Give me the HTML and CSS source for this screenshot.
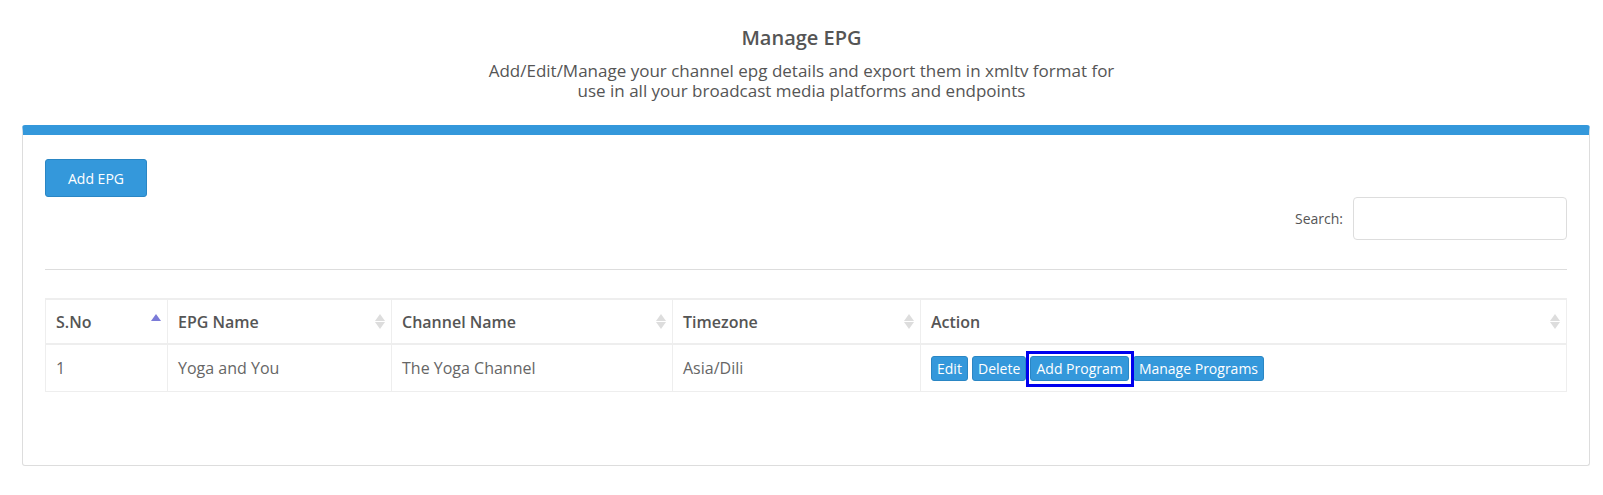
FILE: index.html
```html
<!DOCTYPE html>
<html lang="en">
<head>
    <meta charset="UTF-8">
    <meta name="viewport" content="width=device-width, initial-scale=1.0">
    <title>Manage EPG</title>
    <link rel="stylesheet" href="styles.css">
</head>
<body>
    <div class="page-head">
        <h1>Manage EPG</h1>
        <p>Add/Edit/Manage your channel epg details and export them in xmltv format for<br>use in all your broadcast media platforms and endpoints</p>
    </div>

    <div class="card">
        <div class="toolbar">
            <button class="btn btn-add">Add EPG</button>
        </div>

        <div class="search-row">
            <label for="search">Search:</label>
            <input type="text" id="search">
        </div>

        <hr class="divider">

        <table class="epg-table">
            <thead>
                <tr>
                    <th class="col-sno sorted">S.No<span class="sort asc"></span></th>
                    <th class="col-name">EPG Name<span class="sort"></span></th>
                    <th class="col-channel">Channel Name<span class="sort"></span></th>
                    <th class="col-tz">Timezone<span class="sort"></span></th>
                    <th>Action<span class="sort"></span></th>
                </tr>
            </thead>
            <tbody>
                <tr>
                    <td>1</td>
                    <td>Yoga and You</td>
                    <td>The Yoga Channel</td>
                    <td>Asia/Dili</td>
                    <td class="actions">
                        <button class="btn btn-sm">Edit</button>
                        <button class="btn btn-sm">Delete</button>
                        <button class="btn btn-sm focused">Add Program</button>
                        <button class="btn btn-sm">Manage Programs</button>
                    </td>
                </tr>
            </tbody>
        </table>
    </div>
</body>
</html>
```

FILE: styles.css
```css
body {
    font-family: "Open Sans", Arial, sans-serif;
    background-color: #fff;
    color: #666;
    margin: 0;
    padding: 0;
}

.page-head {
    text-align: center;
    padding-top: 26px;
    padding-bottom: 24px;
}

.page-head h1 {
    font-size: 20px;
    font-weight: 600;
    color: #555;
    margin: 0 0 11px 0;
    line-height: 24px;
}

.page-head p {
    font-size: 17px;
    line-height: 20px;
    color: #555;
    margin: 0;
}

.card {
    margin: 0 13px 30px 22px;
    border: 1px solid #ddd;
    border-top: 10px solid #3498db;
    border-radius: 3px;
    padding: 24px 22px 73px 22px;
}

.btn {
    font-family: "Open Sans", Arial, sans-serif;
    background-color: #3498db;
    color: #fff;
    border: 1px solid #2a86c4;
    border-radius: 3px;
    cursor: pointer;
}

.btn-add {
    width: 102px;
    height: 38px;
    font-size: 14px;
}

.search-row {
    display: flex;
    justify-content: flex-end;
    align-items: center;
    gap: 10px;
    font-size: 14px;
    color: #555;
}

.search-row input {
    width: 214px;
    height: 43px;
    box-sizing: border-box;
    border: 1px solid #ddd;
    border-radius: 4px;
}

.divider {
    border: 0;
    border-top: 1px solid #ddd;
    margin: 29px 0 28px 0;
}

.epg-table {
    width: 100%;
    border-collapse: collapse;
    border: 1px solid #eee;
    border-top: 2px solid #eee;
    font-size: 16px;
}

.epg-table th,
.epg-table td {
    text-align: left;
    padding: 0 10px;
    border: 1px solid #eee;
}

.epg-table th {
    position: relative;
    height: 43px;
    font-weight: 600;
    color: #555;
    border-bottom: 2px solid #eee;
}

.epg-table td {
    height: 46px;
    color: #666;
}

.col-sno { width: 101px; }
.col-name { width: 203px; }
.col-channel { width: 260px; }
.col-tz { width: 227px; }

.sort {
    position: absolute;
    right: 11px;
    top: 14px;
    width: 0;
    height: 16px;
}

.sort::before,
.sort::after {
    content: "";
    position: absolute;
    left: -5px;
    border-left: 5px solid transparent;
    border-right: 5px solid transparent;
}

.sort::before {
    top: 0;
    border-bottom: 7px solid #ddd;
}

.sort::after {
    top: 8px;
    border-top: 7px solid #ddd;
}

.sort.asc::before {
    border-bottom-color: #7b7bd8;
}

.sort.asc::after {
    display: none;
}

.actions {
    white-space: nowrap;
}

.btn-sm {
    font-size: 14px;
    height: 25px;
    padding: 0 5px;
    vertical-align: middle;
}

.btn-sm.focused {
    position: relative;
}

/* focus ring, drawn square like the browser's */
.btn-sm.focused::after {
    content: "";
    position: absolute;
    top: -6px;
    right: -6px;
    bottom: -7px;
    left: -5px;
    border: 3px solid #0000ee;
}
```
